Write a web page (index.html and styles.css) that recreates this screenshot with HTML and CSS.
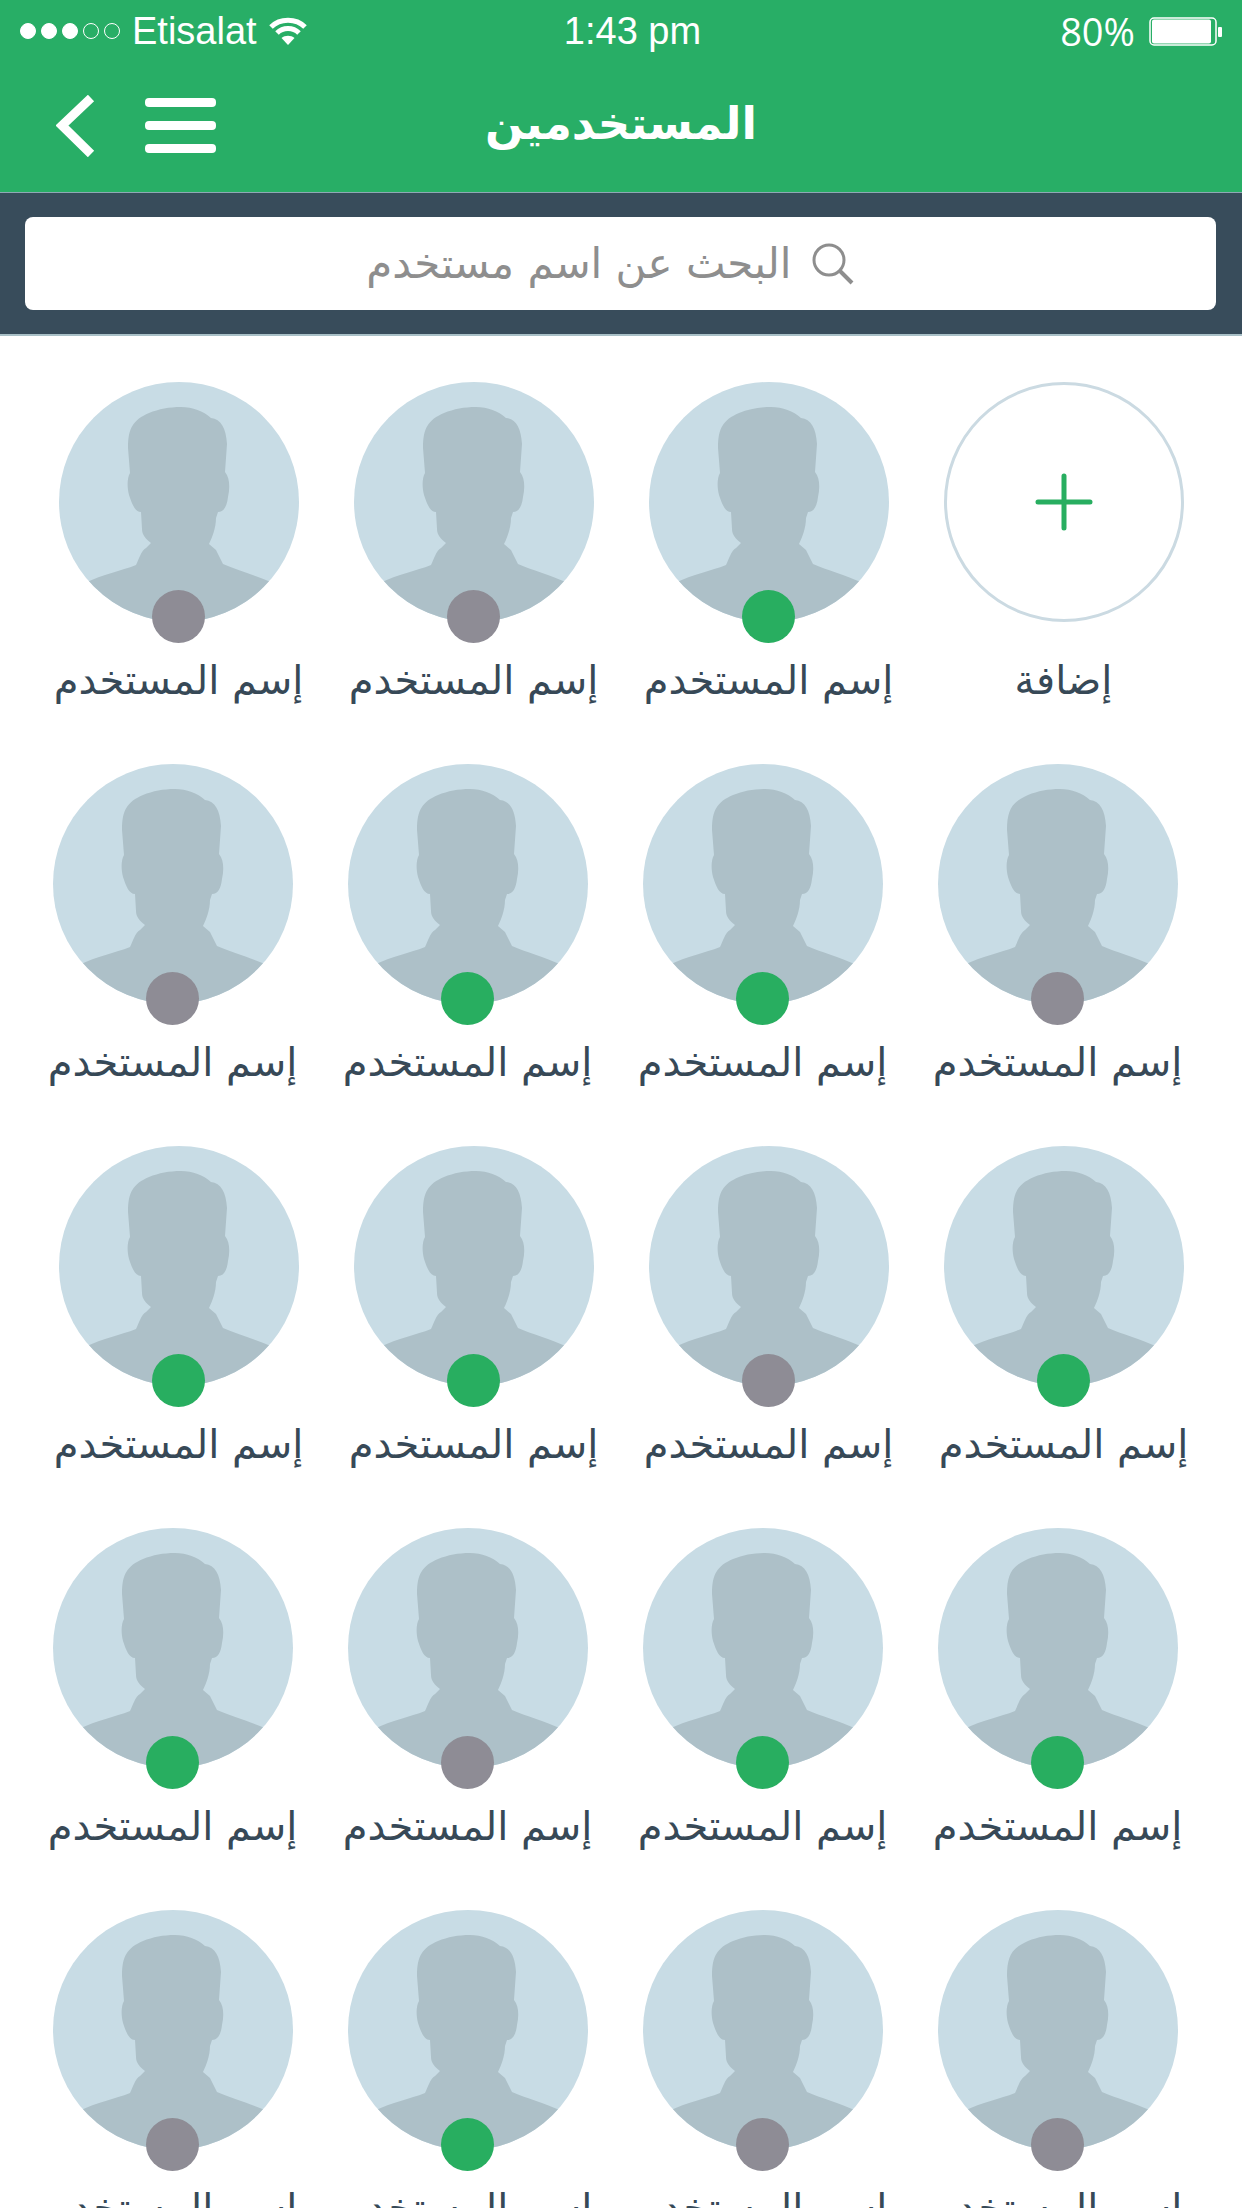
FILE: index.html
```html
<!DOCTYPE html>
<html lang="ar" dir="rtl">
<head>
<meta charset="utf-8">
<meta name="viewport" content="width=device-width, initial-scale=1">
<title>المستخدمين</title>
<link rel="stylesheet" href="styles.css">
</head>
<body>
<svg class="sprite" aria-hidden="true">
  <symbol id="person" viewBox="0 0 240 240">
    <path d="M122 25C134 25 144 29 152 36C162 37 167 46 168 62L166 90C171 96 171 106 169 115C168 124 165 130 159 130L157 136C157 146 153 156 150 162L157 168L164 182C178 188 196 193 214 201V240H26V201C44 192 62 189 77 183C80 177 82 169 87 166L92 161C87 157 83 153 83 147L82 130C76 130 73 122 70 113C68 105 68 96 71 91L69 66C69 46 74 38 90 31C100 27 110 25 122 25Z"/>
  </symbol>
</svg>
<div class="app">
  <header class="header">
    <div class="status" dir="ltr">
      <div class="carrier">
        <span class="signal"><i class="on"></i><i class="on"></i><i class="on"></i><i></i><i></i></span>
        <span>Etisalat</span>
        <svg class="wifi" viewBox="0 0 38 28" aria-hidden="true">
          <path d="M2 10C11 1 27 1 36 10M8 16C14 10 24 10 30 16" fill="none" stroke="#fff" stroke-width="5"/>
          <path d="M12.500 21C16 18 22 18 25.500 21L19 28Z" fill="#fff"/>
        </svg>
      </div>
      <time class="clock">1:43 pm</time>
      <div class="power">
        <span>80%</span>
        <svg class="battery" viewBox="0 0 74 29" aria-hidden="true">
          <rect x="1" y="1" width="66" height="27" rx="4" fill="none" stroke="#fff" stroke-width="1.500"/>
          <rect x="3" y="2.500" width="59" height="24" rx="2" fill="#fff"/>
          <rect x="69" y="10" width="4" height="10" rx="1" fill="#fff"/>
        </svg>
      </div>
    </div>
    <div class="nav" dir="ltr">
      <div class="nav-actions">
        <button class="icon-button" type="button" aria-label="رجوع">
          <svg width="40" height="62" viewBox="0 0 40 62"><path d="M35 3L6 30.500L35 59" fill="none" stroke="#fff" stroke-width="9"/></svg>
        </button>
        <button class="icon-button" type="button" aria-label="القائمة">
          <svg width="72" height="58" viewBox="0 0 72 58" fill="#fff"><rect y="1" width="71" height="9" rx="4"/><rect y="24" width="71" height="9" rx="4"/><rect y="47" width="71" height="9" rx="4"/></svg>
        </button>
      </div>
      <h1 class="title" dir="rtl">المستخدمين</h1>
    </div>
  </header>
  <form class="search" role="search">
    <label class="field">
      <svg width="44" height="44" viewBox="0 0 44 44" fill="none" stroke="#8e8e8e" stroke-width="3" aria-hidden="true"><circle cx="17" cy="18" r="15"/><path d="M28 29L40 41" stroke-width="4"/></svg>
      <input type="text" aria-label="البحث عن اسم مستخدم" placeholder="البحث عن اسم مستخدم">
    </label>
  </form>
  <main class="users">
    <ul class="row">
      <li><button class="user" type="button"><span class="avatar add"><svg width="58" height="58" viewBox="0 0 58 58" stroke="#28ae60" stroke-width="5" stroke-linecap="round"><path d="M29 3V55M3 29H55"/></svg></span><span class="name">إضافة</span></button></li>
      <li><a class="user" href="#"><span class="avatar online"><svg><use href="#person"/></svg></span><span class="name">إسم المستخدم</span></a></li>
      <li><a class="user" href="#"><span class="avatar"><svg><use href="#person"/></svg></span><span class="name">إسم المستخدم</span></a></li>
      <li><a class="user" href="#"><span class="avatar"><svg><use href="#person"/></svg></span><span class="name">إسم المستخدم</span></a></li>
    </ul>
    <ul class="row shifted">
      <li><a class="user" href="#"><span class="avatar"><svg><use href="#person"/></svg></span><span class="name">إسم المستخدم</span></a></li>
      <li><a class="user" href="#"><span class="avatar online"><svg><use href="#person"/></svg></span><span class="name">إسم المستخدم</span></a></li>
      <li><a class="user" href="#"><span class="avatar online"><svg><use href="#person"/></svg></span><span class="name">إسم المستخدم</span></a></li>
      <li><a class="user" href="#"><span class="avatar"><svg><use href="#person"/></svg></span><span class="name">إسم المستخدم</span></a></li>
    </ul>
    <ul class="row">
      <li><a class="user" href="#"><span class="avatar online"><svg><use href="#person"/></svg></span><span class="name">إسم المستخدم</span></a></li>
      <li><a class="user" href="#"><span class="avatar"><svg><use href="#person"/></svg></span><span class="name">إسم المستخدم</span></a></li>
      <li><a class="user" href="#"><span class="avatar online"><svg><use href="#person"/></svg></span><span class="name">إسم المستخدم</span></a></li>
      <li><a class="user" href="#"><span class="avatar online"><svg><use href="#person"/></svg></span><span class="name">إسم المستخدم</span></a></li>
    </ul>
    <ul class="row shifted">
      <li><a class="user" href="#"><span class="avatar online"><svg><use href="#person"/></svg></span><span class="name">إسم المستخدم</span></a></li>
      <li><a class="user" href="#"><span class="avatar online"><svg><use href="#person"/></svg></span><span class="name">إسم المستخدم</span></a></li>
      <li><a class="user" href="#"><span class="avatar"><svg><use href="#person"/></svg></span><span class="name">إسم المستخدم</span></a></li>
      <li><a class="user" href="#"><span class="avatar online"><svg><use href="#person"/></svg></span><span class="name">إسم المستخدم</span></a></li>
    </ul>
    <ul class="row shifted">
      <li><a class="user" href="#"><span class="avatar"><svg><use href="#person"/></svg></span><span class="name">إسم المستخدم</span></a></li>
      <li><a class="user" href="#"><span class="avatar"><svg><use href="#person"/></svg></span><span class="name">إسم المستخدم</span></a></li>
      <li><a class="user" href="#"><span class="avatar online"><svg><use href="#person"/></svg></span><span class="name">إسم المستخدم</span></a></li>
      <li><a class="user" href="#"><span class="avatar"><svg><use href="#person"/></svg></span><span class="name">إسم المستخدم</span></a></li>
    </ul>
  </main>
</div>
</body>
</html>
```
FILE: styles.css
```css
* { box-sizing: border-box; }
body {
  margin: 0;
  background: #fff;
  color: #374957;
  font-family: "DejaVu Sans", sans-serif;
}
.sprite { position: absolute; width: 0; height: 0; }
.app { display: flex; flex-direction: column; height: 100vh; }

.header {
  background: #28ae66;
  color: #fff;
  border-bottom: 1px solid #8fa9b5;
}
.status {
  display: grid;
  grid-template-columns: 1fr auto 1fr;
  align-items: center;
  height: 64px;
  padding: 0 19px 2px 20px;
  font: 38px/44px "Liberation Sans", sans-serif;
}
.carrier, .power, .signal { display: flex; align-items: center; }
.carrier { gap: 12px; }
.signal { gap: 5px; }
.signal i { width: 16px; height: 16px; border: 1px solid #fff; border-radius: 50%; }
.signal .on { background: #fff; }
.wifi { width: 38px; height: 28px; }
.clock { padding-left: 22px; }
.power { justify-content: flex-end; gap: 14px; font-family: "Open Sans", sans-serif; }
.battery { width: 74px; height: 29px; }

.nav {
  display: grid;
  grid-template-columns: 1fr auto 1fr;
  align-items: center;
  height: 128px;
  padding: 0 56px 4px;
}
.nav-actions { display: flex; align-items: center; gap: 49px; }
.icon-button { display: flex; padding: 0; border: 0; background: none; }
.title { margin: 0; padding-bottom: 4px; font-size: 45px; line-height: 64px; font-weight: 700; }

.search {
  padding: 24px 26px 24px 25px;
  background: #384c5b;
  border-bottom: 2px solid #a9c0c7;
}
.field {
  display: flex;
  align-items: center;
  justify-content: center;
  gap: 20px;
  height: 93px;
  padding-right: 24px;
  border-radius: 8px;
  background: #fff;
}
.field input {
  width: 430px;
  height: 72px;
  padding: 0;
  border: 0;
  outline: 0;
  background: none;
  color: #374957;
  font: 42px/60px "DejaVu Sans", sans-serif;
  appearance: none;
}
.field input::placeholder { color: #8e8e8e; opacity: 1; }

.users {
  flex: 1;
  min-height: 0;
  padding-top: 46px;
  overflow-y: auto;
  scrollbar-width: none;
}
.row {
  display: grid;
  grid-template-columns: repeat(4, 1fr);
  height: 382px;
  margin: 0;
  padding: 0 31px;
  list-style: none;
}
.shifted { padding: 0 37px 0 25px; }
.user {
  display: flex;
  flex-direction: column;
  align-items: center;
  gap: 28px;
  width: 100%;
  padding: 0;
  border: 0;
  background: none;
  color: inherit;
  font: inherit;
  text-decoration: none;
}
.avatar {
  position: relative;
  display: flex;
  align-items: center;
  justify-content: center;
  width: 240px;
  height: 240px;
  border-radius: 50%;
  background: #c8dce5;
}
.avatar:not(.add) svg { width: 240px; height: 240px; border-radius: 50%; fill: #adc0c8; }
.avatar:not(.add)::after {
  content: "";
  position: absolute;
  bottom: -21px;
  width: 53px;
  height: 53px;
  border-radius: 50%;
  background: #8e8c95;
}
.avatar.online::after { background: #28ae60; }
.avatar.add { border: 3px solid #cbdae2; background: #fff; }
.name { font-size: 40px; line-height: 60px; white-space: nowrap; }
```
